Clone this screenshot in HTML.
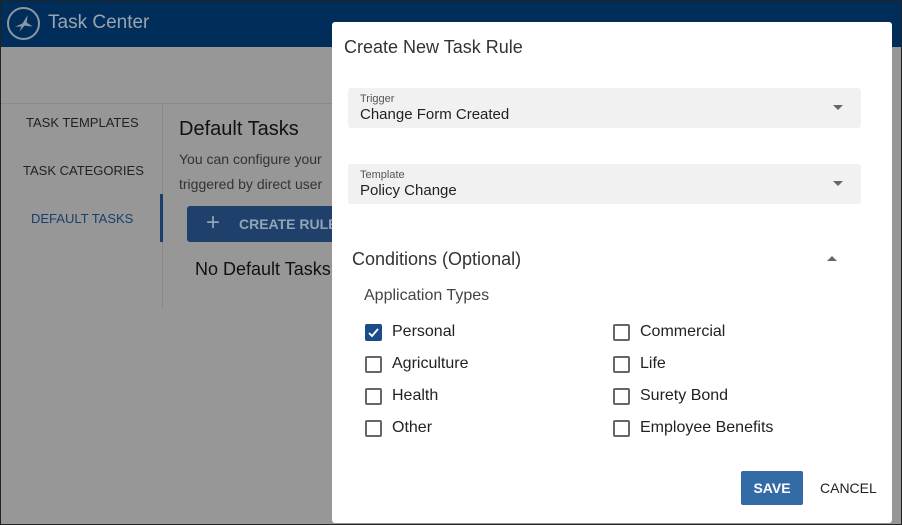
<!DOCTYPE html>
<html><head><style>
*{box-sizing:border-box;margin:0;padding:0}
body{width:902px;height:525px;overflow:hidden;font-family:"Liberation Sans",sans-serif;position:relative;background:#979797}
.frame{position:absolute;left:0;top:0;width:902px;height:525px;border:1px solid #222;z-index:10;pointer-events:none}
.hdr{position:absolute;left:0;top:0;width:902px;height:47px;background:#012d5a}
.hdr .t{position:absolute;left:48px;top:12px;font-size:19px;color:#9aa4b0}
.logo{position:absolute;left:7px;top:7px;width:33px;height:33px;border:2px solid #8d97a4;border-radius:50%}
.line{position:absolute;left:0;top:103px;width:340px;height:1px;background:#8a8a8a}
.vl{position:absolute;left:162px;top:104px;width:1px;height:205px;background:#8a8a8a}
.nav{position:absolute;font-size:13px;color:#222;white-space:nowrap}
.modal{position:absolute;left:332px;top:22px;width:560px;height:501px;background:#fff;border-radius:3px}
.sel{position:absolute;left:16px;width:513px;height:40px;background:#f1f1f1;border-radius:3px}
.sel .l{position:absolute;left:12px;top:5px;font-size:11px;color:#555}
.sel .v{position:absolute;left:12px;top:18px;font-size:15px;color:#222}
.sel .a{position:absolute;right:18px;top:17px;width:0;height:0;border-left:5px solid transparent;border-right:5px solid transparent;border-top:5px solid #666}
.cb{position:absolute;font-size:16px;color:#222;white-space:nowrap}
.cb i{position:absolute;left:-27px;top:1px;width:17px;height:17px;border:2px solid #666;border-radius:2px}
</style></head><body>
<div class="frame"></div>
<div class="hdr"><div class="logo"><svg width="29" height="29" viewBox="0 0 28 28"><path d="M6 17 L13 14 L18 6 L17 13 L23 17 L15 16 L10 22 L12 17Z" fill="#8d97a4"/></svg></div><div class="t">Task Center</div></div>
<div class="line"></div><div class="vl"></div>
<div style="position:absolute;left:160px;top:194px;width:3px;height:48px;background:#1a3f6b"></div>
<div class="nav" style="left:26px;top:115px">TASK TEMPLATES</div>
<div class="nav" style="left:23px;top:163px">TASK CATEGORIES</div>
<div class="nav" style="left:31px;top:211px;color:#1a3f6b">DEFAULT TASKS</div>
<div style="position:absolute;left:179px;top:118px;font-size:20px;color:#111">Default Tasks</div>
<div style="position:absolute;left:179px;top:147px;font-size:14px;color:#333;line-height:25px;white-space:nowrap">You can configure your<br>triggered by direct user</div>
<div style="position:absolute;left:889px;top:150px;font-size:14px;color:#333">i</div>
<div style="position:absolute;left:187px;top:206px;width:150px;height:36px;background:#1f406a;border-radius:3px;color:#93a3b8;font-size:14px;font-weight:bold;white-space:nowrap"><span style="font-size:24px;font-weight:normal;position:absolute;left:19px;top:3px">+</span><span style="position:absolute;left:52px;top:10px">CREATE RULE</span></div>
<div style="position:absolute;left:195px;top:259px;font-size:18px;color:#111;white-space:nowrap">No Default Tasks</div>
<div class="modal">
<div style="position:absolute;left:12px;top:15px;font-size:18px;color:#333">Create New Task Rule</div>
<div class="sel" style="top:66px"><div class="l">Trigger</div><div class="v">Change Form Created</div><div class="a"></div></div>
<div class="sel" style="top:142px"><div class="l">Template</div><div class="v">Policy Change</div><div class="a"></div></div>
<div style="position:absolute;left:20px;top:227px;font-size:18px;color:#333">Conditions (Optional)</div>
<div style="position:absolute;left:495px;top:234px;border-left:5px solid transparent;border-right:5px solid transparent;border-bottom:5px solid #666"></div>
<div style="position:absolute;left:32px;top:265px;font-size:16px;color:#444">Application Types</div>
<div class="cb" style="left:60px;top:301px"><i style="background:#1a4c8c;border-color:#1a4c8c"><svg width="13" height="13" viewBox="0 0 13 13" style="position:absolute;left:0;top:0"><path d="M2 7 L5 10 L11 3" stroke="#fff" stroke-width="1.8" fill="none"/></svg></i>Personal</div>
<div class="cb" style="left:60px;top:333px"><i></i>Agriculture</div>
<div class="cb" style="left:60px;top:365px"><i></i>Health</div>
<div class="cb" style="left:60px;top:397px"><i></i>Other</div>
<div class="cb" style="left:308px;top:301px"><i></i>Commercial</div>
<div class="cb" style="left:308px;top:333px"><i></i>Life</div>
<div class="cb" style="left:308px;top:365px"><i></i>Surety Bond</div>
<div class="cb" style="left:308px;top:397px"><i></i>Employee Benefits</div>
<div style="position:absolute;left:409px;top:449px;width:62px;height:34px;background:#336ba7;border-radius:2px;color:#fff;font-size:14px;font-weight:bold;text-align:center;line-height:34px">SAVE</div>
<div style="position:absolute;left:488px;top:449px;font-size:14px;color:#222;line-height:34px">CANCEL</div>
</div>
</body></html>
